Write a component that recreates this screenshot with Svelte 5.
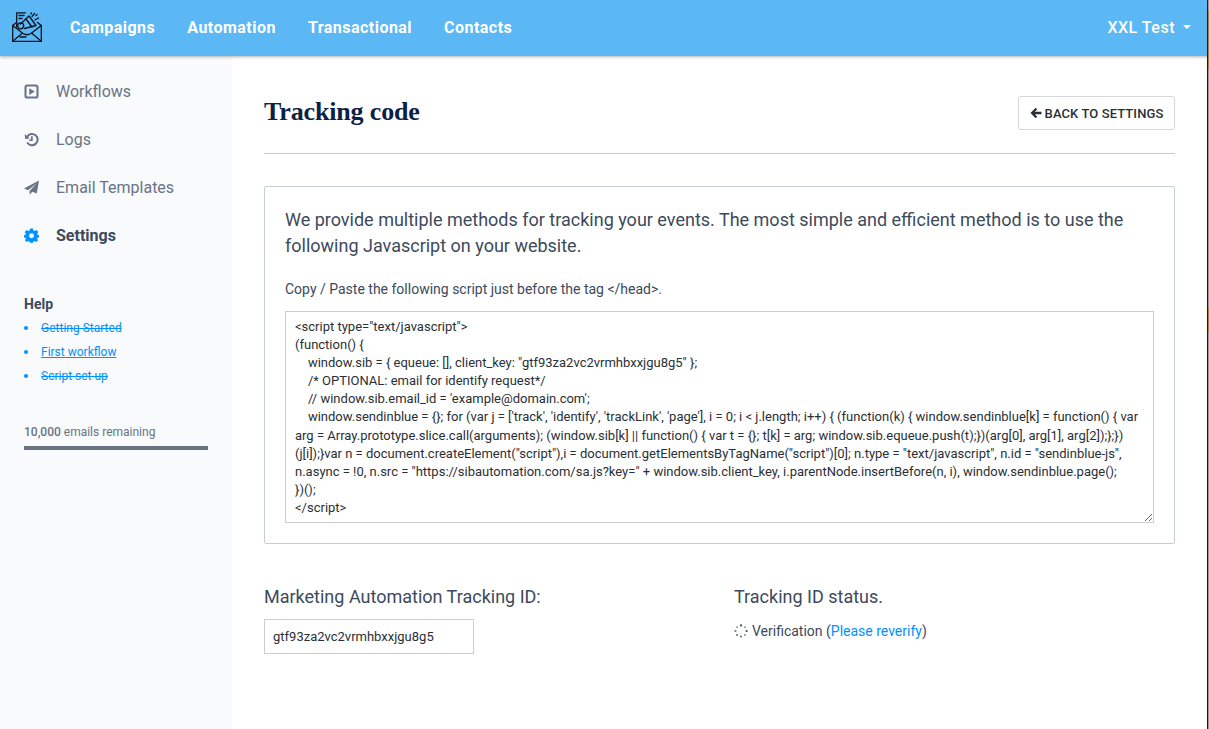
<script lang="ts">
    const navLinks = ['Campaigns', 'Automation', 'Transactional', 'Contacts'];

    const sideLinks = [
        { label: 'Workflows', icon: 'play' },
        { label: 'Logs', icon: 'history' },
        { label: 'Email Templates', icon: 'plane' },
        { label: 'Settings', icon: 'gear', active: true }
    ];

    const helpLinks = [
        { label: 'Getting Started', done: true },
        { label: 'First workflow', done: false },
        { label: 'Script set up', done: true }
    ];

    const snippet = `<script type="text/javascript">
(function() {
    window.sib = { equeue: [], client_key: "gtf93za2vc2vrmhbxxjgu8g5" };
    /* OPTIONAL: email for identify request*/
    // window.sib.email_id = 'example@domain.com';
    window.sendinblue = {}; for (var j = ['track', 'identify', 'trackLink', 'page'], i = 0; i < j.length; i++) { (function(k) { window.sendinblue[k] = function() { var arg = Array.prototype.slice.call(arguments); (window.sib[k] || function() { var t = {}; t[k] = arg; window.sib.equeue.push(t);})(arg[0], arg[1], arg[2]);};})(j[i]);}var n = document.createElement("script"),i = document.getElementsByTagName("script")[0]; n.type = "text/javascript", n.id = "sendinblue-js", n.async = !0, n.src = "https://sibautomation.com/sa.js?key=" + window.sib.client_key, i.parentNode.insertBefore(n, i), window.sendinblue.page();
})();
<\/script>`;
</script>

<div class="page">
    <header class="topbar">
        <svg class="logo" viewBox="0 0 30 30" fill="none" stroke="#0d1320" stroke-width="1.3" stroke-linejoin="round" stroke-linecap="round">
            <path d="M4.5 10.5 L0.7 13.5 V29.3 H29.3 V13.5 L25.5 10.5" />
            <path d="M0.7 13.5 L11 21.5 Q15 24 19 21.5 L29.3 13.5 M0.7 29.3 L10.5 21 M29.3 29.3 L19.5 21" />
            <path d="M4.7 15 V0.8 H13.5 M7 3.5 H12 M7 6.5 H10" />
            <path d="M8.5 12 L17 4 L24 13.5 L12.5 16.5" />
            <circle cx="8.7" cy="13.8" r="3" />
            <path d="M14 7 L20 15" />
            <path d="M20 4.5 L22.5 1.5 M23 8 L26.5 6 M19 2 L19.5 0.8 M24 3.5 L25 2.5" />
            <path d="M8 25 H14" />
        </svg>
        <nav class="main-nav">
            {#each navLinks as link}
                <a href="#top">{link}</a>
            {/each}
        </nav>
        <a class="account" href="#top">XXL Test <span class="caret"></span></a>
    </header>

    <div class="body-row">
        <aside class="sidebar">
            <ul class="side-menu">
                {#each sideLinks as item}
                    <li class:active={item.active}>
                        <svg class="side-icon" viewBox="0 0 16 16">
                            {#if item.icon === 'play'}
                                <rect x="1.6" y="1.6" width="12.8" height="12.8" rx="2" fill="none" stroke="currentColor" stroke-width="2.2" />
                                <path d="M5.6 4.4 L11.4 8 L5.6 11.6 Z" fill="currentColor" />
                            {:else if item.icon === 'history'}
                                <path d="M3.4 5 A6 6 0 1 1 3.4 11.2" fill="none" stroke="currentColor" stroke-width="2.2" />
                                <path d="M0.8 2.2 L1.2 7.4 L6.2 6.8 Z" fill="currentColor" />
                                <path d="M8.4 4.6 V8.8 H5.6" fill="none" stroke="currentColor" stroke-width="1.8" />
                            {:else if item.icon === 'plane'}
                                <path d="M16 0.4 L13.6 14.4 L8.8 12.4 L6 15.6 V11.8 L13.4 3.4 L4.4 10.8 L0 9 Z" fill="currentColor" />
                            {:else}
                                <path fill="currentColor" fill-rule="evenodd" d="M6.4 0.5 H9.6 L10 2.6 L11.3 3.2 L13.1 2 L15.2 4.2 L14 6 L14.5 7.2 L16 7.6 V10 L14.4 10.3 L13.9 11.5 L15 13.1 L13 15 L11.2 13.8 L10 14.4 L9.6 15.6 H6.4 L6 14.4 L4.8 13.8 L3 15 L1 13.1 L2.1 11.5 L1.6 10.3 L0 10 V7.6 L1.5 7.2 L2 6 L0.8 4.2 L2.9 2 L4.7 3.2 L6 2.6 Z M8 5.6 A2.6 2.6 0 1 0 8 10.8 A2.6 2.6 0 1 0 8 5.6 Z" />
                            {/if}
                        </svg>
                        <span>{item.label}</span>
                    </li>
                {/each}
            </ul>

            <h4 class="help-title">Help</h4>
            <ul class="help-list">
                {#each helpLinks as help}
                    <li><a href="#top" class:done={help.done}>{help.label}</a></li>
                {/each}
            </ul>

            <p class="remaining"><strong>10,000</strong> emails remaining</p>
            <div class="remaining-bar"></div>
        </aside>

        <main class="content">
            <div class="title-row">
                <h1>Tracking code</h1>
                <button class="back-btn">
                    <svg viewBox="0 0 14 14" class="back-arrow"><path d="M6.6 1 L8.4 2.8 L5.6 5.4 H13.4 V8.6 H5.6 L8.4 11.2 L6.6 13 L0.6 7 Z" fill="currentColor" /></svg>
                    BACK TO SETTINGS
                </button>
            </div>

            <section class="panel">
                <p class="lead">We provide multiple methods for tracking your events. The most simple and efficient method is to use the following Javascript on your website.</p>
                <p class="hint">Copy / Paste the following script just before the tag &lt;/head&gt;.</p>
                <textarea class="code" readonly spellcheck="false" value={snippet}></textarea>
            </section>

            <div class="bottom-row">
                <div class="col-id">
                    <h3>Marketing Automation Tracking ID:</h3>
                    <input class="id-input" type="text" readonly value="gtf93za2vc2vrmhbxxjgu8g5" />
                </div>
                <div class="col-status">
                    <h3>Tracking ID status.</h3>
                    <p class="status">
                        <svg class="spinner" viewBox="0 0 14 14">
                            {#each Array(8) as _, i}
                                <circle cx={7 + 5.6 * Math.cos(i * Math.PI / 4)} cy={7 + 5.6 * Math.sin(i * Math.PI / 4)} r={i % 2 ? 0.9 : 1.1} fill={i % 3 === 0 ? '#3c4a5c' : '#6f7b8a'} />
                            {/each}
                        </svg>
                        Verification (<a href="#top">Please reverify</a>)
                    </p>
                </div>
            </div>
        </main>
    </div>
    <div class="window-edge"></div>
</div>

<style>
    :global(body) {
        margin: 0;
        background: #fff;
        font-family: Roboto, "Liberation Sans", sans-serif;
        color: #3c4a5c;
    }

    .page { height: 729px; overflow: hidden; display: flex; flex-direction: column; position: relative; }

    /* edge of the captured window */
    .window-edge {
        position: absolute;
        top: 0;
        right: 0;
        bottom: 0;
        width: 1px;
        z-index: 2;
        border-left: 1px solid #16181c;
        background: linear-gradient(#9a9a9a 10px, #a08a2a 10px, #a08a2a 70px, #9a9a9a 70px, #9a9a9a 308px, #a08a2a 308px, #a08a2a 332px, #9a9a9a 332px);
    }

    .topbar {
        height: 56px;
        flex: none;
        box-sizing: border-box;
        display: flex;
        align-items: center;
        background: #5bb8f5;
        box-shadow: 0 1px 3px rgba(0, 0, 0, 0.3);
        position: relative;
        z-index: 1;
        padding: 0 18px 2px 12px;
    }
    .logo { width: 30px; height: 30px; margin-right: 28px; flex: none; }
    .main-nav { display: flex; gap: 32px; }
    .main-nav a { color: #fff; font-size: 16px; font-weight: 700; text-decoration: none; letter-spacing: 0.47px; }
    .account { margin-left: auto; color: #fff; font-size: 16px; font-weight: 500; text-decoration: none; letter-spacing: 0.5px; display: flex; align-items: center; gap: 8px; }
    .caret { width: 0; height: 0; border-left: 4px solid transparent; border-right: 4px solid transparent; border-top: 4px solid #fff; }

    .body-row { flex: 1; display: flex; min-height: 0; }

    .sidebar { width: 232px; flex: none; box-sizing: border-box; background: #f9fafc; padding: 11px 24px 0; }
    .side-menu { list-style: none; margin: 0; padding: 0; }
    .side-menu li { height: 48px; display: flex; align-items: center; gap: 17px; font-size: 16px; color: #687484; }
    .side-menu li.active { color: #3c4a5c; font-weight: 700; }
    .side-menu li.active .side-icon { color: #0092ff; }
    .side-icon { width: 15px; height: 15px; flex: none; }

    .help-title { margin: 35px 0 0; font-size: 14px; line-height: 20px; font-weight: 700; color: #3c4a5c; }
    .help-list { list-style: none; margin: 2px 0 0; padding: 0; }
    .help-list li { height: 24px; display: flex; align-items: center; font-size: 12px; position: relative; padding-left: 17px; }
    .help-list li::before { content: ""; position: absolute; left: 0; top: 10px; width: 4px; height: 4px; border-radius: 50%; background: #0092ff; }
    .help-list a { color: #0092ff; text-decoration: underline; }
    .help-list a.done { text-decoration: line-through; }

    .remaining { margin: 36px 0 0; font-size: 12px; line-height: 16px; color: #687484; }
    .remaining strong { font-weight: 500; }
    .remaining-bar { height: 4px; width: 184px; margin-top: 6px; background: #687484; }

    .content { flex: 1; min-width: 0; box-sizing: border-box; padding: 40px 34px 0 32px; }

    .title-row { display: flex; justify-content: space-between; align-items: flex-start; height: 57px; border-bottom: 1px solid #c5ced8; }
    h1 { margin: 0; font-family: "Liberation Serif", serif; font-size: 26px; line-height: 32px; font-weight: 700; color: #0c2245; letter-spacing: -0.15px; }
    .back-btn { height: 34px; width: 157px; box-sizing: border-box; padding: 0; display: flex; align-items: center; justify-content: center; gap: 3px; background: #fff; border: 1px solid #d4d6da; border-radius: 3px; font-family: inherit; font-size: 13px; font-weight: 500; color: #2a2f36; letter-spacing: 0.1px; }
    .back-arrow { width: 12px; height: 12px; }

    .panel { margin-top: 32px; border: 1px solid #c5ced8; border-radius: 2px; padding: 20px; height: 358px; box-sizing: border-box; }
    .lead { margin: 0; font-size: 18px; line-height: 26px; color: #3c4a5c; }
    .hint { margin: 20px 0 0; font-size: 14px; line-height: 20px; color: #3c4a5c; }
    .code { display: block; box-sizing: border-box; width: 100%; height: 212px; margin-top: 12px; padding: 6px 9px; border: 1px solid #cdcdcd; border-radius: 0; outline: none; font-family: Roboto, "Liberation Sans", sans-serif; font-size: 13px; line-height: 18.1px; color: #2a2f36; overflow: hidden; }

    .bottom-row { display: flex; margin-top: 41px; }
    .col-id { width: 470px; }
    h3 { margin: 0; font-size: 18px; line-height: 24px; font-weight: 400; color: #3c4a5c; }
    .id-input { display: block; box-sizing: border-box; width: 210px; height: 35px; margin-top: 10px; padding: 0 8px; border: 1px solid #cdcdcd; border-radius: 0; outline: none; font-family: inherit; font-size: 13px; color: #2a2f36; }
    .status { margin: 12px 0 0; font-size: 14px; line-height: 20px; display: flex; align-items: center; white-space: pre; }
    .status a { color: #0092ff; text-decoration: none; }
    .spinner { width: 14px; height: 14px; margin-right: 0.5px; }
</style>
